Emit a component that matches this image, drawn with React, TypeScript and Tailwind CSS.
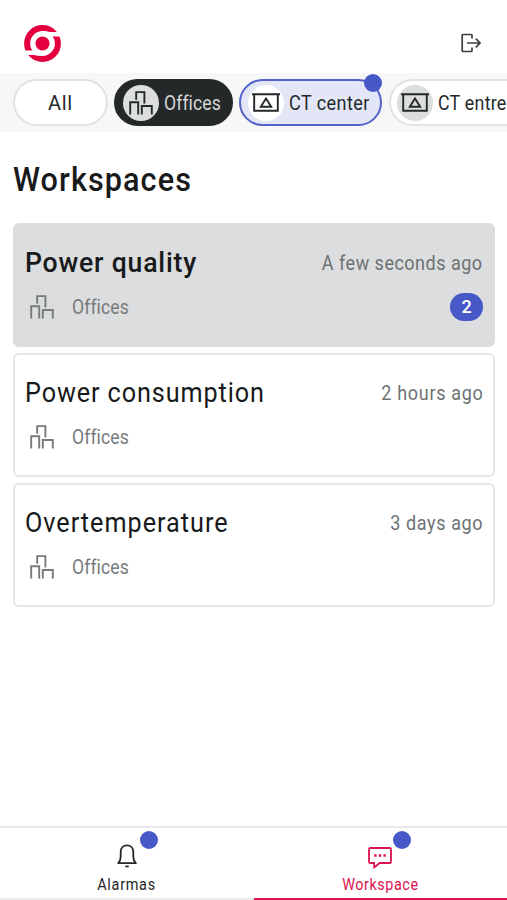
import type { ReactNode } from "react";

type Workspace = {
  title: string;
  titleClass: string;
  time: string;
  timeClass: string;
  unread?: number;
};

const workspaces: Workspace[] = [
  {
    title: "Power quality",
    titleClass: "font-medium scale-x-[0.95] tracking-[0.85px]",
    time: "A few seconds ago",
    timeClass: "tracking-[0.55px]",
    unread: 2,
  },
  {
    title: "Power consumption",
    titleClass: "scale-x-90 tracking-[1px]",
    time: "2 hours ago",
    timeClass: "tracking-[0.75px]",
  },
  {
    title: "Overtemperature",
    titleClass: "scale-x-90 tracking-[1.1px]",
    time: "3 days ago",
    timeClass: "tracking-[0.67px]",
  },
];

function Logo() {
  return (
    <svg className="h-[37px] w-[37px]" viewBox="0 0 37 37">
      <circle cx="18.5" cy="18.5" r="15.4" fill="none" stroke="#e4003f" strokeWidth="6" />
      <path d="M17 6.6C22 5.6 25 7 29 7H37V11.5H26ZM20 30.4C15 31.4 12 30 8 30H0V25.5H11Z" fill="#fff" />
      <circle cx="18.5" cy="18.5" r="7" fill="#e4003f" />
    </svg>
  );
}

function LogoutIcon() {
  return (
    <svg className="h-5 w-5" viewBox="0 0 20 20" fill="none" stroke="#3c3f40" strokeWidth="1.7">
      <path d="M11 5.5V2.5Q11 1.5 10 1.5H2.3Q1.2 1.5 1.2 2.5V17.5Q1.2 18.5 2.3 18.5H10Q11 18.5 11 17.5V14.5" />
      <path d="M6 10H19M14.8 5.7L19 10L14.8 14.3" />
    </svg>
  );
}

function OfficeIcon({ className }: { className?: string }) {
  return (
    <svg className={className} viewBox="0 0 24 24" fill="none" stroke="currentColor" strokeWidth="1.9">
      <path d="M1.2 23.4V11.2H9.2V23.4" />
      <path d="M7.2 8.8V1.1H15.4V12.4" />
      <path d="M12.8 23.4V15H22.8V23.4" />
    </svg>
  );
}

function CenterIcon() {
  return (
    <svg className="h-[19px] w-7" viewBox="0 0 28 19" fill="none" stroke="#252829" strokeWidth="1.9">
      <path d="M0 1.2H28M2.2 1.2V17.7H25.8V1.2" />
      <path d="M14 5.6L19.2 13.8H8.8Z" />
    </svg>
  );
}

function BellIcon() {
  return (
    <svg className="h-6 w-5" viewBox="0 0 20 24" fill="none" stroke="#252829" strokeWidth="1.8" strokeLinejoin="round">
      <path d="M1.2 19.2H18.8C17 17.3 16.3 15.3 16.3 12.5V8C16.3 4 13.6 1.4 10 1.4S3.7 4 3.7 8V12.5C3.7 15.3 3 17.3 1.2 19.2Z" />
      <path d="M9 22.4H11" strokeLinecap="round" />
    </svg>
  );
}

function MessageIcon() {
  return (
    <svg className="h-[22px] w-6" viewBox="0 0 24 22" fill="none" stroke="currentColor" strokeWidth="1.8" strokeLinejoin="round">
      <path d="M2.3 1H21.7Q23 1 23 2.3V14.7Q23 16 21.7 16H11.5L6.2 20.7V16H2.3Q1 16 1 14.7V2.3Q1 1 2.3 1Z" />
      <path d="M6.2 8.5H8.6M10.8 8.5H13.2M15.4 8.5H17.8" strokeWidth="2.4" />
    </svg>
  );
}

function Dot({ className }: { className: string }) {
  return <span className={`absolute h-[18px] w-[18px] rounded-full bg-[#4758c7] ${className}`} />;
}

function Chip({ className, children }: { className: string; children: ReactNode }) {
  return (
    <button className={`relative flex h-[47px] shrink-0 items-center rounded-full border-2 text-xl ${className}`}>
      {children}
    </button>
  );
}

function WorkspaceCard({ item }: { item: Workspace }) {
  return (
    <article
      className={`flex h-[124px] flex-col rounded-md border-2 pt-[20px] pr-2.5 pl-[10px] ${
        item.unread ? "border-[#dbddde] bg-[#dbddde]" : "border-[#e5e6e6] bg-white"
      }`}
    >
      <div className="flex h-9 items-center justify-between whitespace-nowrap">
        <h2 className={`origin-left text-[28px] text-[#17191a] ${item.titleClass}`}>{item.title}</h2>
        <time className={`mb-px origin-right scale-x-90 text-xl text-[#6d7273] ${item.timeClass}`}>{item.time}</time>
      </div>
      <div className="mt-2 flex h-9 items-center text-[#777b7c]">
        <OfficeIcon className="ml-[5px] h-6 w-6" />
        <span className="ml-[18px] origin-left scale-x-[0.88] text-xl tracking-[0.1px]">Offices</span>
        {item.unread && (
          <span className="ml-auto flex h-7 w-[33px] items-center justify-center rounded-full bg-[#4758c7] text-lg font-medium text-white">
            {item.unread}
          </span>
        )}
      </div>
    </article>
  );
}

export default function App() {
  return (
    <div className="flex h-[900px] w-[507px] flex-col overflow-hidden bg-white font-['Roboto',sans-serif] text-[#252829]">
      <header className="flex h-[73px] shrink-0 items-center justify-between pt-[13px] pr-[26px] pl-6">
        <Logo />
        <button aria-label="Log out">
          <LogoutIcon />
        </button>
      </header>

      <div className="flex h-[59px] shrink-0 items-center gap-1.5 bg-[#f7f7f7] pl-[13px] whitespace-nowrap">
        <Chip className="w-[95px] justify-center border-[#e2e2e2] bg-white">
          <span className="mt-px tracking-[0.7px]">All</span>
        </Chip>
        <Chip className="w-[119px] border-[#252829] bg-[#252829] pl-[7px] text-[#d5d7d8]">
          <span className="flex h-9 w-9 items-center justify-center rounded-full bg-[#dcdee0]">
            <OfficeIcon className="h-6 w-6 text-[#252829]" />
          </span>
          <span className="mt-px ml-[5px] origin-left scale-x-[0.88] tracking-[0.1px]">Offices</span>
        </Chip>
        <Chip className="mr-px w-[143px] border-[#5363c9] bg-[#e3e6f7] pl-[7px]">
          <span className="flex h-9 w-9 items-center justify-center rounded-full bg-white">
            <CenterIcon />
          </span>
          <span className="mt-px ml-[5px] origin-left scale-x-90 tracking-[0.5px]">CT center</span>
          <Dot className="-top-[7px] -right-[2px]" />
        </Chip>
        <Chip className="w-[155px] border-[#e2e2e2] bg-white pl-[6px]">
          <span className="flex h-9 w-9 items-center justify-center rounded-full bg-[#dcdddd]">
            <CenterIcon />
          </span>
          <span className="mt-px ml-[5px] origin-left scale-x-[0.89] tracking-[0.3px]">CT entre</span>
        </Chip>
      </div>

      <main className="flex-1 px-[13px] pt-[27px]">
        <h1 className="h-10 origin-left scale-x-90 text-[34px] leading-10 font-medium tracking-[1.2px] text-[#17191a]">
          Workspaces
        </h1>
        <section className="mt-6 mr-[-1px] flex flex-col gap-1.5">
          {workspaces.map((item) => (
            <WorkspaceCard key={item.title} item={item} />
          ))}
        </section>
      </main>

      <nav className="flex h-[74px] shrink-0 border-t-2 border-[#e9e9e9] text-base">
        <button className="relative flex flex-1 flex-col items-center border-b-2 border-[#e9e9e9] pt-4">
          <BellIcon />
          <span className="mt-[5px] scale-x-90 tracking-[0.8px]">Alarmas</span>
          <Dot className="top-[3px] left-[140px]" />
        </button>
        <button className="relative flex flex-1 flex-col items-center border-b-2 border-[#db1450] pt-[19px] text-[#db1450]">
          <MessageIcon />
          <span className="mt-1 scale-x-90 tracking-[0.6px]">Workspace</span>
          <Dot className="top-[3px] left-[139px]" />
        </button>
      </nav>
    </div>
  );
}
